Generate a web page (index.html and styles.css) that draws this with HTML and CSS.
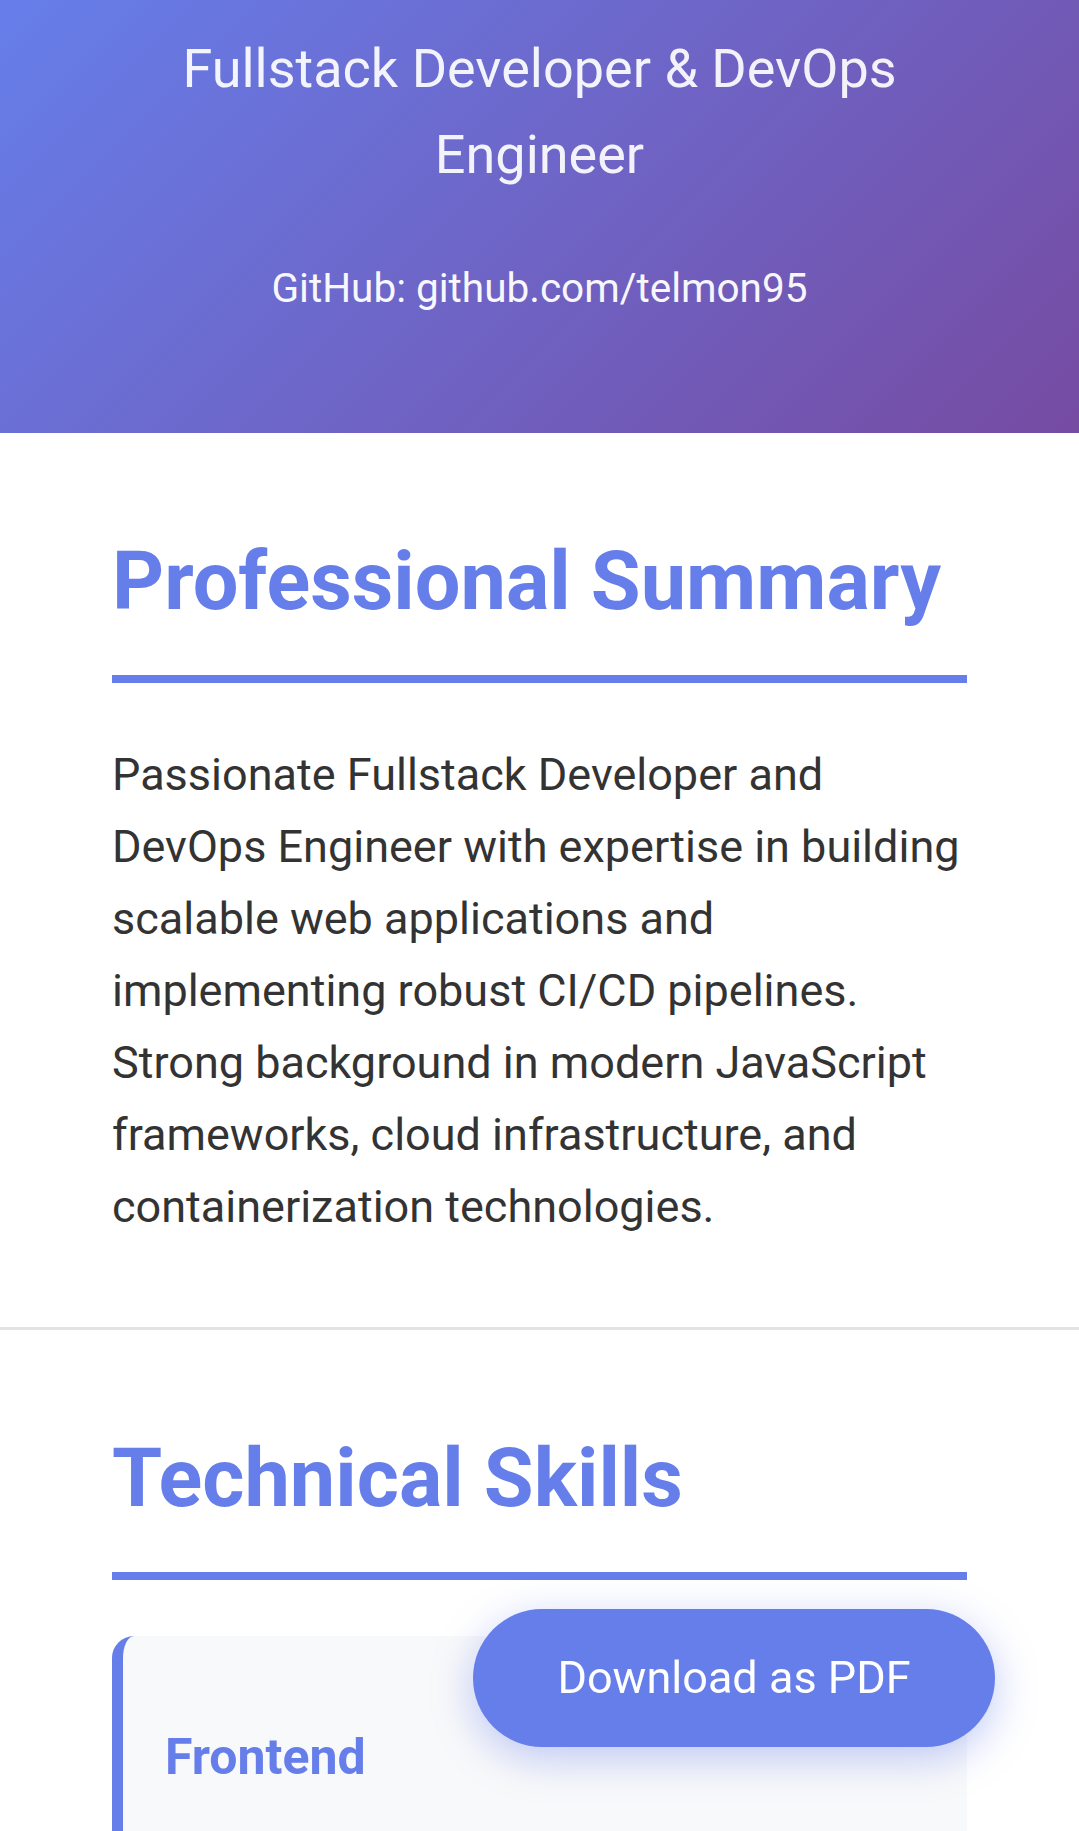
FILE: index.html
```html
<!DOCTYPE html>
<html lang="en">
<head>
<meta charset="utf-8">
<title>Resume</title>
<link rel="stylesheet" href="styles.css">
</head>
<body>
<header class="hero">
  <p class="hero-title">Fullstack Developer &amp; DevOps Engineer</p>
  <div class="contact">
    <p class="contact-item">GitHub: github.com/telmon95</p>
  </div>
</header>
<main class="resume">
  <section class="section">
    <h2 class="section-title">Professional Summary</h2>
    <p class="summary">Passionate Fullstack Developer and DevOps Engineer with expertise in building scalable web applications and implementing robust CI/CD pipelines. Strong background in modern JavaScript frameworks, cloud infrastructure, and containerization technologies.</p>
  </section>
  <section class="section">
    <h2 class="section-title">Technical Skills</h2>
    <div class="skill-card">
      <h3 class="skill-title">Frontend</h3>
    </div>
  </section>
</main>
<button class="pdf-button" type="button">Download as PDF</button>
</body>
</html>
```

FILE: styles.css
```css
* {
  box-sizing: border-box;
}

html, body {
  margin: 0;
  padding: 0;
}

body {
  font-family: Roboto, "Noto Sans", "Liberation Sans", sans-serif;
  font-size: 45px;
  line-height: 1.6;
  color: #333;
  background: #fff;
}

.hero {
  background: linear-gradient(135deg, #667eea 0%, #764ba2 100%);
  color: #fff;
  text-align: center;
  padding: 26px 112px 112px;
}

.hero-title {
  margin: 0 0 57px;
  font-size: 54px;
  line-height: 86.4px;
  opacity: 0.92;
}

.contact-item {
  margin: 0;
  font-size: 40.5px;
  line-height: 64.8px;
  opacity: 0.95;
}

.section {
  padding: 83px 112px 84px;
  border-bottom: 3px solid #e3e3e3;
}

.section-title {
  margin: 0 0 56px;
  padding-bottom: 28px;
  border-bottom: 8px solid #667eea;
  color: #667eea;
  font-size: 81px;
  font-weight: 700;
  line-height: 131px;
}

.summary {
  margin: 0;
  font-size: 45px;
  line-height: 72px;
}

.skill-card {
  background: #f8f9fa;
  border-left: 11px solid #667eea;
  border-radius: 22px;
  padding: 42px 42px;
}

.skill-title {
  margin: 39px 0 48px;
  color: #667eea;
  font-size: 50px;
  font-weight: 700;
  line-height: 80px;
}

.pdf-button {
  position: fixed;
  right: 84px;
  bottom: 84px;
  width: 522px;
  height: 138px;
  padding: 0;
  border: none;
  border-radius: 69px;
  background: #667eea;
  color: #fff;
  font-family: Roboto, "Noto Sans", "Liberation Sans", sans-serif;
  font-size: 45px;
  line-height: 72px;
  box-shadow: 0 11px 42px rgba(102, 126, 234, 0.4);
  cursor: pointer;
}
```
